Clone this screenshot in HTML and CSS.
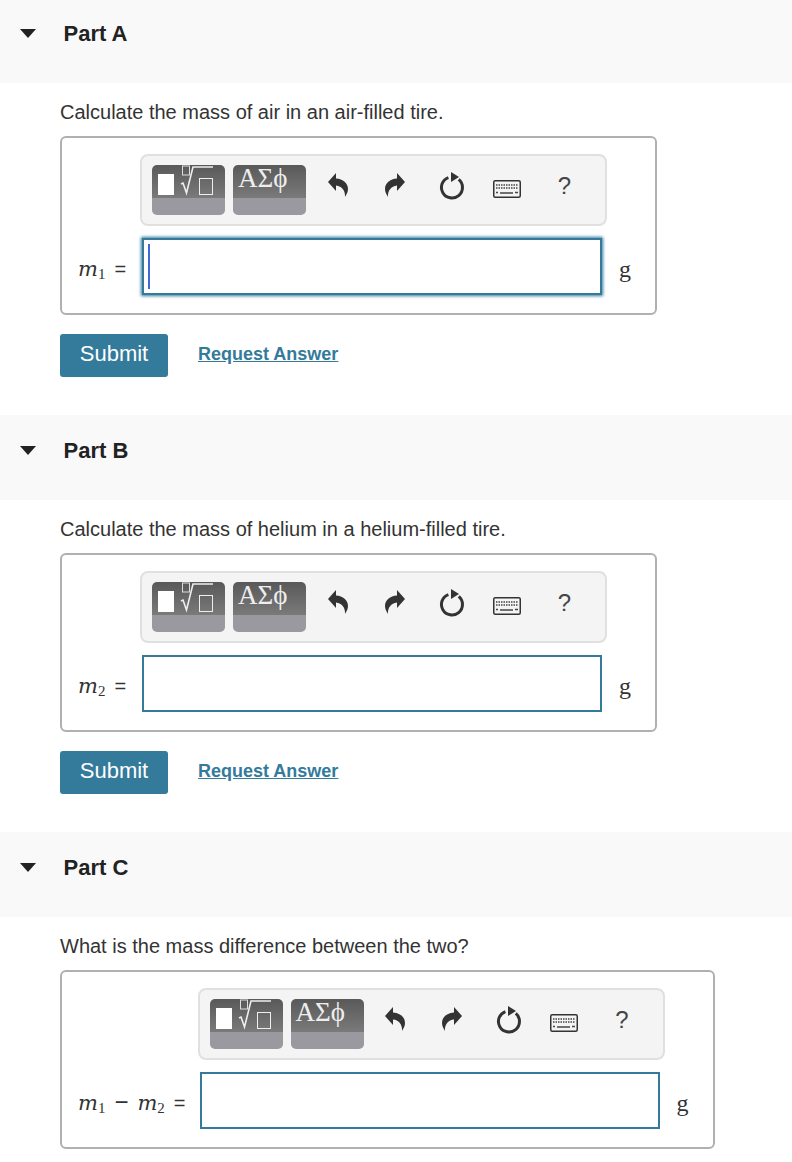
FILE: index.html
```html
<!DOCTYPE html>
<html lang="en">
<head>
  <meta charset="UTF-8">
  <meta name="viewport" content="width=device-width, initial-scale=1">
  <title>Mass of air in a tire</title>
  <link rel="stylesheet" href="styles.css">
</head>
<body>

<svg class="sprite" aria-hidden="true">
  <symbol id="i-templates" viewBox="0 0 73 33">
    <rect x="6" y="9" width="16" height="21" fill="#fff"/>
    <rect x="30.500" y="1" width="7" height="9" fill="none" stroke="#ddd" stroke-width="1"/>
    <path d="M29 19 L31 18 L34.500 28 L41 2 H61" fill="none" stroke="#eee" stroke-width="1.600"/>
    <rect x="47.500" y="13.500" width="13" height="16" fill="none" stroke="#eee" stroke-width="1"/>
  </symbol>
  <symbol id="i-undo" viewBox="0 0 20 24">
    <path d="M0 9 L8 0 V5.500 C15 6 20 10 20 16 C20 19 18.500 21.500 17 24 C17.500 18 14 13 8 12.500 V18 Z" fill="#333"/>
  </symbol>
  <symbol id="i-reload" viewBox="0 0 26 28">
    <path d="M9.400 5.600 A10.500 10.500 0 1 0 19.750 7.460" fill="none" stroke="#333" stroke-width="3"/>
    <path d="M12 0 L20 5 L12 10 Z" fill="#333"/>
  </symbol>
  <symbol id="i-keyboard" viewBox="0 0 28 18">
    <rect x="0.750" y="0.750" width="26.500" height="16.500" rx="1.500" fill="#f4f4f4" stroke="#333" stroke-width="1.500"/>
    <path d="M3 5 H25 M3 8 H25" stroke="#444" stroke-width="1.500" stroke-dasharray="1.500 1"/>
    <path d="M3 12.500 H5 M7 13 H20 M22 12.500 H25" stroke="#444" stroke-width="1.500"/>
  </symbol>
</svg>

<section class="part part-first">
  <header class="part-header">
    <span class="caret-down"></span>
    <h2>Part A</h2>
  </header>
  <div class="part-body">
    <p class="question">Calculate the mass of air in an air-filled tire.</p>
    <div class="answer-box">
      <div class="toolbar">
        <div class="tool-btn"><svg class="tool-art"><use href="#i-templates"/></svg></div>
        <div class="tool-btn"><span class="greek">ΑΣϕ</span></div>
        <div class="tool-icon tool-icon-first"><svg class="ic-arrow"><use href="#i-undo"/></svg></div>
        <div class="tool-icon"><svg class="ic-arrow flip"><use href="#i-undo"/></svg></div>
        <div class="tool-icon"><svg class="ic-reload"><use href="#i-reload"/></svg></div>
        <div class="tool-icon"><svg class="ic-keyboard"><use href="#i-keyboard"/></svg></div>
        <div class="tool-icon help">?</div>
      </div>
      <div class="math-label"><i>m</i><sub>1</sub><span class="eq">=</span></div>
      <div class="answer-input focused"><span class="text-cursor"></span></div>
      <div class="unit">g</div>
    </div>
    <div class="actions">
      <button class="submit">Submit</button>
      <a class="request" href="#">Request Answer</a>
    </div>
  </div>
</section>

<section class="part">
  <header class="part-header">
    <span class="caret-down"></span>
    <h2>Part B</h2>
  </header>
  <div class="part-body">
    <p class="question">Calculate the mass of helium in a helium-filled tire.</p>
    <div class="answer-box">
      <div class="toolbar">
        <div class="tool-btn"><svg class="tool-art"><use href="#i-templates"/></svg></div>
        <div class="tool-btn"><span class="greek">ΑΣϕ</span></div>
        <div class="tool-icon tool-icon-first"><svg class="ic-arrow"><use href="#i-undo"/></svg></div>
        <div class="tool-icon"><svg class="ic-arrow flip"><use href="#i-undo"/></svg></div>
        <div class="tool-icon"><svg class="ic-reload"><use href="#i-reload"/></svg></div>
        <div class="tool-icon"><svg class="ic-keyboard"><use href="#i-keyboard"/></svg></div>
        <div class="tool-icon help">?</div>
      </div>
      <div class="math-label"><i>m</i><sub>2</sub><span class="eq">=</span></div>
      <div class="answer-input"></div>
      <div class="unit">g</div>
    </div>
    <div class="actions">
      <button class="submit">Submit</button>
      <a class="request" href="#">Request Answer</a>
    </div>
  </div>
</section>

<section class="part">
  <header class="part-header">
    <span class="caret-down"></span>
    <h2>Part C</h2>
  </header>
  <div class="part-body">
    <p class="question">What is the mass difference between the two?</p>
    <div class="answer-box">
      <div class="toolbar">
        <div class="tool-btn"><svg class="tool-art"><use href="#i-templates"/></svg></div>
        <div class="tool-btn"><span class="greek">ΑΣϕ</span></div>
        <div class="tool-icon tool-icon-first"><svg class="ic-arrow"><use href="#i-undo"/></svg></div>
        <div class="tool-icon"><svg class="ic-arrow flip"><use href="#i-undo"/></svg></div>
        <div class="tool-icon"><svg class="ic-reload"><use href="#i-reload"/></svg></div>
        <div class="tool-icon"><svg class="ic-keyboard"><use href="#i-keyboard"/></svg></div>
        <div class="tool-icon help">?</div>
      </div>
      <div class="math-label"><i>m</i><sub>1</sub><span class="minus">−</span><i>m</i><sub>2</sub><span class="eq">=</span></div>
      <div class="answer-input"></div>
      <div class="unit">g</div>
    </div>
  </div>
</section>

</body>
</html>
```

FILE: styles.css
```css
* { margin: 0; padding: 0; box-sizing: border-box; }
body {
  font-family: 'Liberation Sans', Arial, sans-serif;
  background: #ffffff;
  color: #333;
}
.sprite {
  display: none;
}
.part-header {
  height: 85px;
  background: #f9f9f9;
  padding: 0 0 0 20px;
  display: flex;
  align-items: flex-start;
}
.part-first .part-header {
  height: 83px;
}
.part-first .part-header .caret-down {
  margin-top: 29px;
}
.part-first .part-header h2 {
  margin-top: 21px;
}
.caret-down {
  width: 0;
  height: 0;
  margin-top: 31px;
  border-left: 8.5px solid transparent;
  border-right: 8.5px solid transparent;
  border-top: 9px solid #222;
}
.part-header h2 {
  margin-top: 23px;
  margin-left: 27.500px;
  font-size: 22px;
  line-height: 26px;
  font-weight: 700;
  color: #222;
}
.part-body {
  padding: 17px 0 38px 60px;
}
.part:last-child .part-body {
  padding-bottom: 13px;
}
.question {
  font-size: 20px;
  line-height: 24px;
  margin-bottom: 12px;
}
.answer-box {
  width: fit-content;
  display: grid;
  grid-template-columns: auto 460px 15px;
  column-gap: 14px;
  row-gap: 12px;
  align-items: center;
  padding: 16px 24px 18px 16px;
  border: 2px solid #b0b0b0;
  border-radius: 6px;
}
.toolbar {
  grid-column: 2 / 4;
  margin-left: -2px;
  width: 467px;
  height: 72px;
  background: #f4f4f4;
  border: 2px solid #e0e0e0;
  border-radius: 8px;
  padding: 9px 0 0 10px;
  display: flex;
  align-items: flex-start;
  gap: 8px;
}
.tool-btn {
  width: 73px;
  height: 50px;
  flex: none;
  border-radius: 5px;
  background: linear-gradient(#595959 0, #7a7a7a 33px, #9a99a0 33px);
}
.tool-art {
  display: block;
  width: 73px;
  height: 33px;
}
.greek {
  display: block;
  padding-left: 5px;
  font-family: 'Liberation Serif', serif;
  font-size: 27px;
  line-height: 27px;
  color: #eee;
}
.tool-icon {
  width: 57px;
  height: 50px;
  flex: none;
  margin-left: -8px;
  display: flex;
  justify-content: center;
  align-items: center;
}
.tool-icon-first {
  margin-left: -5px;
}
.tool-icon svg {
  display: block;
}
.ic-arrow {
  width: 20px;
  height: 24px;
  margin-bottom: 10px;
}
.flip {
  transform: scaleX(-1);
}
.ic-reload {
  width: 26px;
  height: 28px;
  margin-bottom: 9px;
}
.ic-keyboard {
  width: 28px;
  height: 18px;
  margin: 0 4px 2px 0;
}
.help {
  font-size: 24px;
  color: #444;
  padding: 0 2px 8px 0;
}
.math-label {
  min-width: 50px;
  padding-top: 5px;
  white-space: nowrap;
  font-family: 'DejaVu Serif', serif;
  font-size: 21px;
  line-height: 24px;
  color: #333;
}
.math-label sub {
  font-family: 'Liberation Serif', serif;
  font-size: 15px;
  vertical-align: -3px;
  line-height: 0;
}
.eq {
  margin-left: 9px;
  font-family: 'Liberation Sans', sans-serif;
  font-size: 20px;
}
.minus {
  margin: 0 9px 0 9px;
  font-family: 'Liberation Sans', sans-serif;
  font-size: 24px;
  line-height: 0;
}
.answer-input {
  width: 460px;
  height: 57px;
  border: 2px solid #337a9b;
  background: #fff;
  padding: 4px 0 0 4px;
}
.answer-input.focused {
  box-shadow: 0 0 3px 1px #337a9b;
}
.text-cursor {
  display: block;
  width: 2px;
  height: 45px;
  background: #3f68d8;
}
.unit {
  margin-left: 3px;
  padding-top: 6px;
  font-family: 'Liberation Serif', serif;
  font-size: 24px;
  color: #333;
}
.actions {
  margin-top: 19px;
  display: flex;
  align-items: center;
  gap: 30px;
}
.submit {
  width: 108px;
  height: 43px;
  padding-bottom: 3px;
  border: none;
  border-radius: 3px;
  background: #337a9b;
  color: #fff;
  font-family: inherit;
  font-size: 22px;
}
.request {
  margin-top: -3px;
  font-size: 18px;
  font-weight: 700;
  color: #337a9b;
}
```
